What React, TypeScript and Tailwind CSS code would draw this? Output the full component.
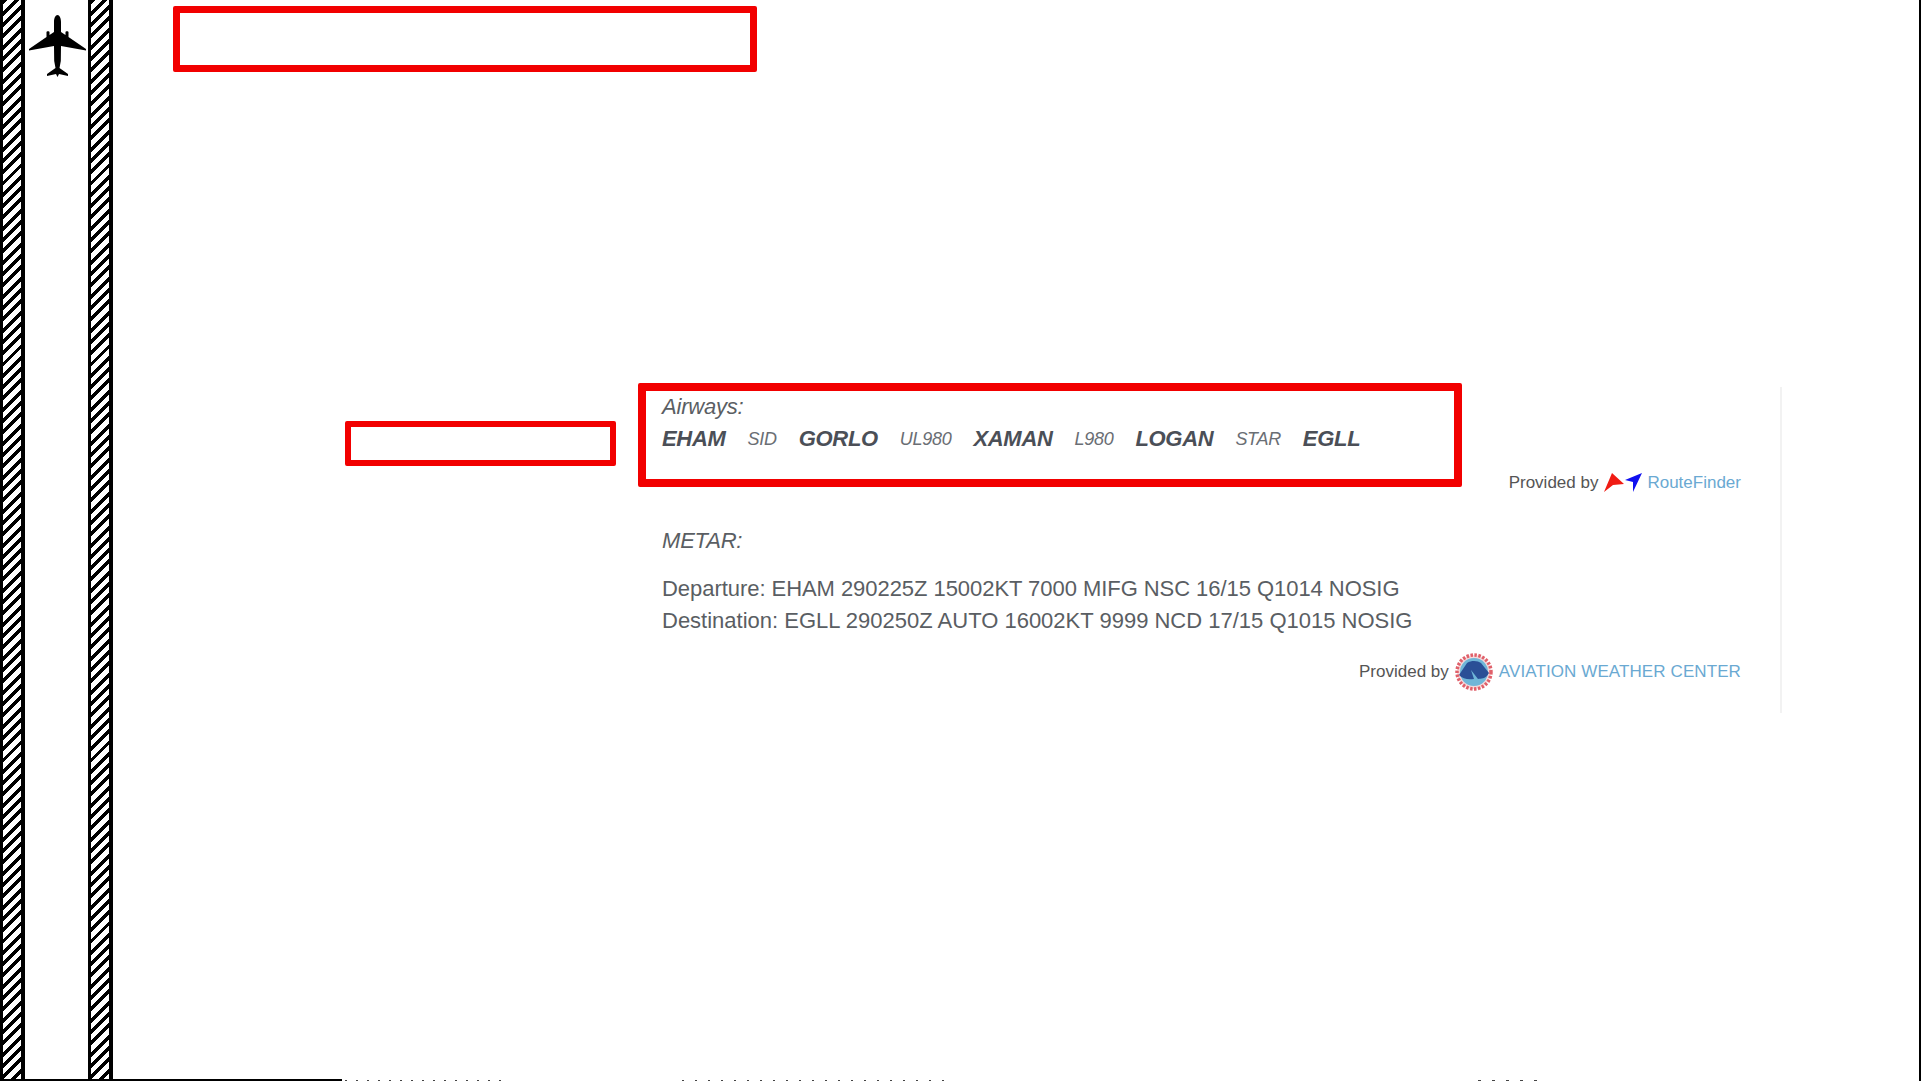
function Stripe() {
  return <div className="h-full w-[25px] shrink-0 border-l-[3px] border-r-[4px] border-black bg-[repeating-linear-gradient(135deg,#000_0,#000_3.5px,#fff_3.5px,#fff_8px)]" />;
}

function Plane() {
  return (
    <svg viewBox="0 0 57 62" className="mt-[15px] h-[62px] w-[57px] shrink-0 translate-x-px" fill="#000">
      <path d="M28.5 0 C26.5 0 25 3 25 7 L25 17 L20.5 20 L20.5 17 C20.5 16 17.5 16 17.5 17 L17.5 22 L0 34 L0 35.5 L25 31 L25.2 46 L26.5 53 L18 59 L18 61 L27 59 L28.5 62 L30 59 L39 61 L39 59 L30.5 53 L31.8 46 L32 31 L57 35.5 L57 34 L39.5 22 L39.5 17 C39.5 16 36.5 16 36.5 17 L36.5 20 L32 17 L32 7 C32 3 30.5 0 28.5 0 Z" />
    </svg>
  );
}

function RouteLogo() {
  return (
    <svg viewBox="0 0 38 22" className="ml-[6px] mr-[5px] h-[22px] w-[38px] shrink-0">
      <path d="M8 1 L20 12 L9 13 L0 20 Z" fill="#f01c14" />
      <path d="M38 1 L21 8 L29 10 L29 20 Z" fill="#1010f0" />
    </svg>
  );
}

function AwcLogo() {
  return (
    <svg viewBox="0 0 38 38" className="mx-[6px] h-[38px] w-[38px] shrink-0">
      <circle cx="19" cy="19" r="17" fill="#f4d8da" stroke="#e0606a" strokeWidth="3.5" strokeDasharray="2.5 1.5" />
      <circle cx="19" cy="19" r="14" fill="#6fb6d8" />
      <path d="M4 22 L12 10 C17 7 23 8 26 10 L34 20 C30 27 26 25 23 26 L16 17 L19 26 C13 27 8 26 4 22 Z" fill="#2a4f96" />
    </svg>
  );
}

function App() {
  const link = "text-[#6aa9d2]";
  const minor = "ml-[22px] text-[18px] font-normal tracking-[-0.3px] text-[#6a6e74]";
  return (
    <div className="relative flex h-[1081px] w-full overflow-hidden border-r-2 border-black bg-white font-['Liberation_Sans',Arial,sans-serif] text-[#5a5e63]">
      <div className="flex h-[1080px] w-[113px] shrink-0 justify-between">
        <Stripe />
        <Plane />
        <Stripe />
      </div>
      <div className="min-w-0 flex-1 flex-col">
        <div className="ml-[60px] mt-[6px] h-[66px] w-[584px] rounded-[2px] border-[7px] border-[#f20000]" />
        <div className="mt-[311px] flex">
          <div className="ml-[232px] mt-[38px] h-[45px] w-[271px] shrink-0 rounded-[2px] border-[6px] border-[#f20000]" />
          <div className="relative ml-[22px] flex h-[330px] w-[1144px] shrink-0 flex-col pr-[41px]">
            <div className="absolute bottom-0 right-0 top-[4px] w-[2px] bg-[#f2f2f2]" />
            <div className="h-[104px] w-[824px] rounded-[2px] border-[8px] border-[#f20000] pl-[16px] pt-[4px]">
              <div className="text-[22px] leading-[24px] italic tracking-[-0.2px]">Airways:</div>
              <div className="mt-[7px] flex items-center text-[22px] leading-[26px] font-bold italic tracking-[-0.3px] text-[#4b4f57]">
                <span>EHAM</span>
                <span className={minor}>SID</span>
                <span className="ml-[22px]">GORLO</span>
                <span className={minor}>UL980</span>
                <span className="ml-[22px]">XAMAN</span>
                <span className={minor}>L980</span>
                <span className="ml-[22px]">LOGAN</span>
                <span className={minor}>STAR</span>
                <span className="ml-[22px]">EGLL</span>
              </div>
            </div>
            <div className="-mt-[16px] flex h-[24px] items-center justify-end text-[17px]">
              <span className="text-[#555]">Provided by</span>
              <RouteLogo />
              <span className={link}>RouteFinder</span>
            </div>
            <div className="mt-[33px] pl-[24px] text-[22px] leading-[26px] italic tracking-[-0.2px]">METAR:</div>
            <div className="mt-[19px] pl-[24px] text-[22px] leading-[32px]">
              <div className="tracking-[-0.05px]">Departure: EHAM 290225Z 15002KT 7000 MIFG NSC 16/15 Q1014 NOSIG</div>
              <div>Destination: EGLL 290250Z AUTO 16002KT 9999 NCD 17/15 Q1015 NOSIG</div>
            </div>
            <div className="mt-[16px] flex h-[38px] items-center justify-end text-[17px]">
              <span className="text-[#555]">Provided by</span>
              <AwcLogo />
              <span className={`${link} tracking-[0.1px]`}>AVIATION WEATHER CENTER</span>
            </div>
          </div>
        </div>
      </div>
      <div className="absolute bottom-0 left-0 h-[2px] w-[342px] bg-black" />
      <div className="absolute bottom-0 left-[345px] h-px w-[165px] bg-[repeating-linear-gradient(90deg,#444_0,#444_2px,transparent_2px,transparent_11px)]" />
      <div className="absolute bottom-0 left-[682px] h-px w-[270px] bg-[repeating-linear-gradient(90deg,#444_0,#444_2px,transparent_2px,transparent_13px)]" />
      <div className="absolute bottom-0 left-[1478px] h-px w-[60px] bg-[repeating-linear-gradient(90deg,#444_0,#444_3px,transparent_3px,transparent_14px)]" />
    </div>
  );
}

export default App;
